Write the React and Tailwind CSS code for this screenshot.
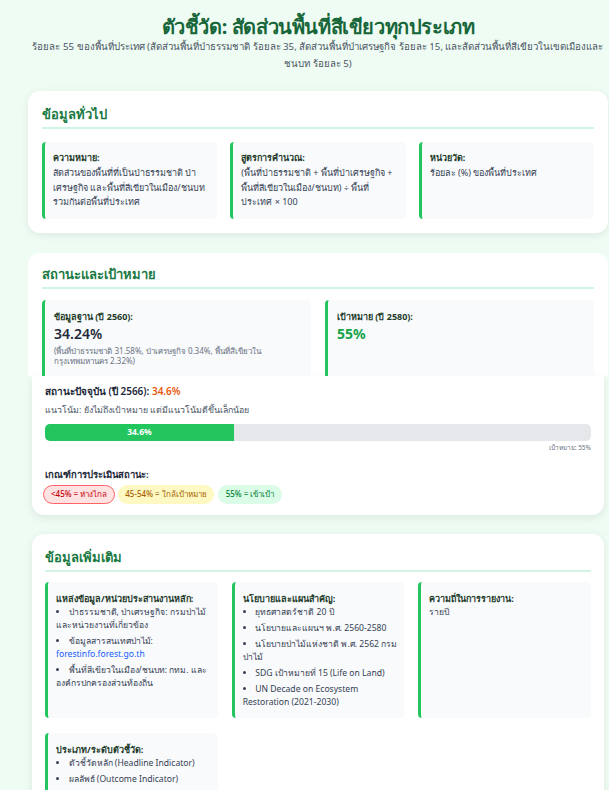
import React from 'react'

function InfoBox({ label, children, className = '' }) {
  return (
    <div className={`bg-[#f8fafc] border-l-[3px] border-[#22c55e] rounded-[4px] pl-[8px] pb-[9px] ${className}`}>
      <div className="text-[9px] font-bold text-[#1f3b2a] leading-[14px]">{label}</div>
      {children}
    </div>
  )
}

function BulletList({ items }) {
  return (
    <ul className="list-disc list-inside text-[8.6px] text-gray-700 leading-[13px] space-y-[3px]">
      {items.map((item, i) => (
        <li key={i}>{item}</li>
      ))}
    </ul>
  )
}

export default function App() {
  return (
    <div className="min-h-screen bg-[#effcf3] overflow-hidden [font-family:'Noto_Sans',sans-serif]">
      <div className="ml-[28px] w-[580px] pt-[13px] pb-10">
        <header className="text-center">
          <h1 className="text-[20px] font-bold text-[#17663a] leading-[28px] tracking-[-0.4px]">
            ตัวชี้วัด: สัดส่วนพื้นที่สีเขียวทุกประเภท
          </h1>
          <p className="text-[9.7px] text-gray-600 leading-[17px] -mt-[3px]">
            ร้อยละ 55 ของพื้นที่ประเทศ (สัดส่วนพื้นที่ป่าธรรมชาติ ร้อยละ 35, สัดส่วนพื้นที่ป่าเศรษฐกิจ ร้อยละ 15, และสัดส่วนพื้นที่สีเขียวในเขตเมืองและชนบท ร้อยละ 5)
          </p>
        </header>

        {/* general info */}
        <section className="mt-[19px] bg-white rounded-xl shadow-[0_2px_8px_rgba(0,0,0,0.08)] px-[14px] pt-[13px] pb-[14px]">
          <h2 className="text-[13px] font-semibold text-[#1a7a43] leading-[20px] pb-[3px] border-b-2 border-[#d1f5e3]">
            ข้อมูลทั่วไป
          </h2>
          <div className="grid grid-cols-3 gap-[13px] mt-[13px]">
            <InfoBox label="ความหมาย:" className="pt-[9px] pr-[6px]">
              <p className="text-[9px] text-gray-700 leading-[14.5px] mt-[1px]">
                สัดส่วนของพื้นที่ที่เป็นป่าธรรมชาติ ป่าเศรษฐกิจ และพื้นที่สีเขียวในเมือง/ชนบท รวมกันต่อพื้นที่ประเทศ
              </p>
            </InfoBox>
            <InfoBox label="สูตรการคำนวณ:" className="pt-[9px] pr-[6px]">
              <p className="text-[9px] text-gray-700 leading-[14.5px] mt-[1px]">
                (พื้นที่ป่าธรรมชาติ + พื้นที่ป่าเศรษฐกิจ + พื้นที่สีเขียวในเมือง/ชนบท) ÷ พื้นที่ประเทศ × 100
              </p>
            </InfoBox>
            <InfoBox label="หน่วยวัด:" className="pt-[9px] pr-[6px]">
              <p className="text-[9px] text-gray-700 leading-[14.5px] mt-[1px]">ร้อยละ (%) ของพื้นที่ประเทศ</p>
            </InfoBox>
          </div>
        </section>

        {/* status & target */}
        <section className="mt-[20px] bg-white rounded-t-xl px-[14px] pt-[11px]">
          <h2 className="text-[13px] font-semibold text-[#1a7a43] leading-[20px] pb-[3px] border-b-2 border-[#d1f5e3]">
            สถานะและเป้าหมาย
          </h2>
          <div className="grid grid-cols-2 gap-[14px] mt-[11px]">
            <div className="bg-[#f8fafc] border-l-[3px] border-[#22c55e] rounded-t-[4px] px-[9px] pt-[10px] h-[76px] overflow-hidden">
              <div className="text-[9px] font-bold text-[#1f3b2a] leading-[14px]">ข้อมูลฐาน (ปี 2560):</div>
              <div className="text-[14px] font-semibold text-gray-800 leading-[18px] mt-[1px]">34.24%</div>
              <p className="text-[8px] text-gray-500 leading-[10px] mt-[3px]">
                (พื้นที่ป่าธรรมชาติ 31.58%, ป่าเศรษฐกิจ 0.34%, พื้นที่สีเขียวในกรุงเทพมหานคร 2.32%)
              </p>
            </div>
            <div className="bg-[#f8fafc] border-l-[3px] border-[#22c55e] rounded-t-[4px] px-[9px] pt-[10px] h-[76px]">
              <div className="text-[9px] font-bold text-[#1f3b2a] leading-[14px]">เป้าหมาย (ปี 2580):</div>
              <div className="text-[14px] font-bold text-[#16a34a] leading-[18px] mt-[1px]">55%</div>
            </div>
          </div>
        </section>
        <section className="mx-[4px] bg-white rounded-b-xl shadow-[0_3px_8px_rgba(0,0,0,0.08)] px-[13px] pt-[6px] pb-[11px]">
          <div className="text-[10px] font-semibold text-gray-800 leading-[18px]">
            สถานะปัจจุบัน (ปี 2566): <span className="text-[#ea580c]">34.6%</span>
          </div>
          <div className="text-[8.8px] text-gray-600 leading-[14px] mt-[3px]">
            แนวโน้ม: ยังไม่ถึงเป้าหมาย แต่มีแนวโน้มดีขึ้นเล็กน้อย
          </div>
          <div className="mt-[7px] h-[17px] bg-gray-200 rounded-[5px] overflow-hidden">
            <div className="h-full bg-[#22c55e] flex items-center justify-center text-[8.5px] font-bold text-white" style={{ width: '34.6%' }}>
              34.6%
            </div>
          </div>
          <div className="text-right text-[6.5px] text-gray-500 leading-[12px] mt-[1px]">เป้าหมาย: 55%</div>
          <div className="text-[9.5px] font-semibold text-gray-800 leading-[16px] mt-[13px]">เกณฑ์การประเมินสถานะ:</div>
          <div className="flex gap-[3px] mt-[2px] -ml-[2px]">
            <span className="inline-flex items-center h-[19px] px-[7px] rounded-full bg-red-100 border-[1.5px] border-red-400 text-[8px] text-red-700 font-medium">
              &lt;45% = ห่างไกล
            </span>
            <span className="inline-flex items-center h-[19px] px-[7px] rounded-full bg-yellow-100 text-[8px] text-yellow-700 font-medium">
              45-54% = ใกล้เป้าหมาย
            </span>
            <span className="inline-flex items-center h-[19px] px-[8px] ml-[1px] rounded-full bg-green-100 text-[8px] text-green-700 font-medium">
              55% = เข้าเป้า
            </span>
          </div>
        </section>

        {/* additional info */}
        <section className="mt-[19px] mx-[4px] bg-white rounded-xl shadow-[0_2px_8px_rgba(0,0,0,0.08)] px-[13px] pt-[13px] pb-[14px]">
          <h2 className="text-[13px] font-semibold text-[#1a7a43] leading-[20px] pb-[3px] border-b-2 border-[#d1f5e3]">
            ข้อมูลเพิ่มเติม
          </h2>
          <div className="grid grid-cols-3 gap-x-[14px] gap-y-[15px] mt-[10px]">
            <InfoBox label="แหล่งข้อมูล/หน่วยประสานงานหลัก:" className="pt-[10px] pr-[6px]">
              <BulletList
                items={[
                  <>
                    ป่าธรรมชาติ, ป่าเศรษฐกิจ: <span className="whitespace-nowrap">กรมป่าไม้</span><wbr />และหน่วยงานที่เกี่ยวข้อง
                  </>,
                  <>
                    ข้อมูลสารสนเทศป่าไม้: <a href="#" className="text-blue-600">forestinfo.forest.go.th</a>
                  </>,
                  'พื้นที่สีเขียวในเมือง/ชนบท: กทม. และองค์กรปกครองส่วนท้องถิ่น',
                ]}
              />
            </InfoBox>
            <InfoBox label="นโยบายและแผนสำคัญ:" className="pt-[10px] pr-[6px]">
              <BulletList
                items={[
                  'ยุทธศาสตร์ชาติ 20 ปี',
                  'นโยบายและแผนฯ พ.ศ. 2560-2580',
                  <>
                    นโยบายป่าไม้แห่งชาติ พ.ศ. 2562 กรม<wbr />ป่าไม้
                  </>,
                  'SDG เป้าหมายที่ 15 (Life on Land)',
                  'UN Decade on Ecosystem Restoration (2021-2030)',
                ]}
              />
            </InfoBox>
            <InfoBox label="ความถี่ในการรายงาน:" className="pt-[10px] pr-[6px]">
              <p className="text-[8.6px] text-gray-700 leading-[13px]">รายปี</p>
            </InfoBox>
            <InfoBox label="ประเภท/ระดับตัวชี้วัด:" className="pt-[10px] pr-[6px]">
              <BulletList items={['ตัวชี้วัดหลัก (Headline Indicator)', 'ผลลัพธ์ (Outcome Indicator)']} />
            </InfoBox>
          </div>
        </section>
      </div>
    </div>
  )
}
